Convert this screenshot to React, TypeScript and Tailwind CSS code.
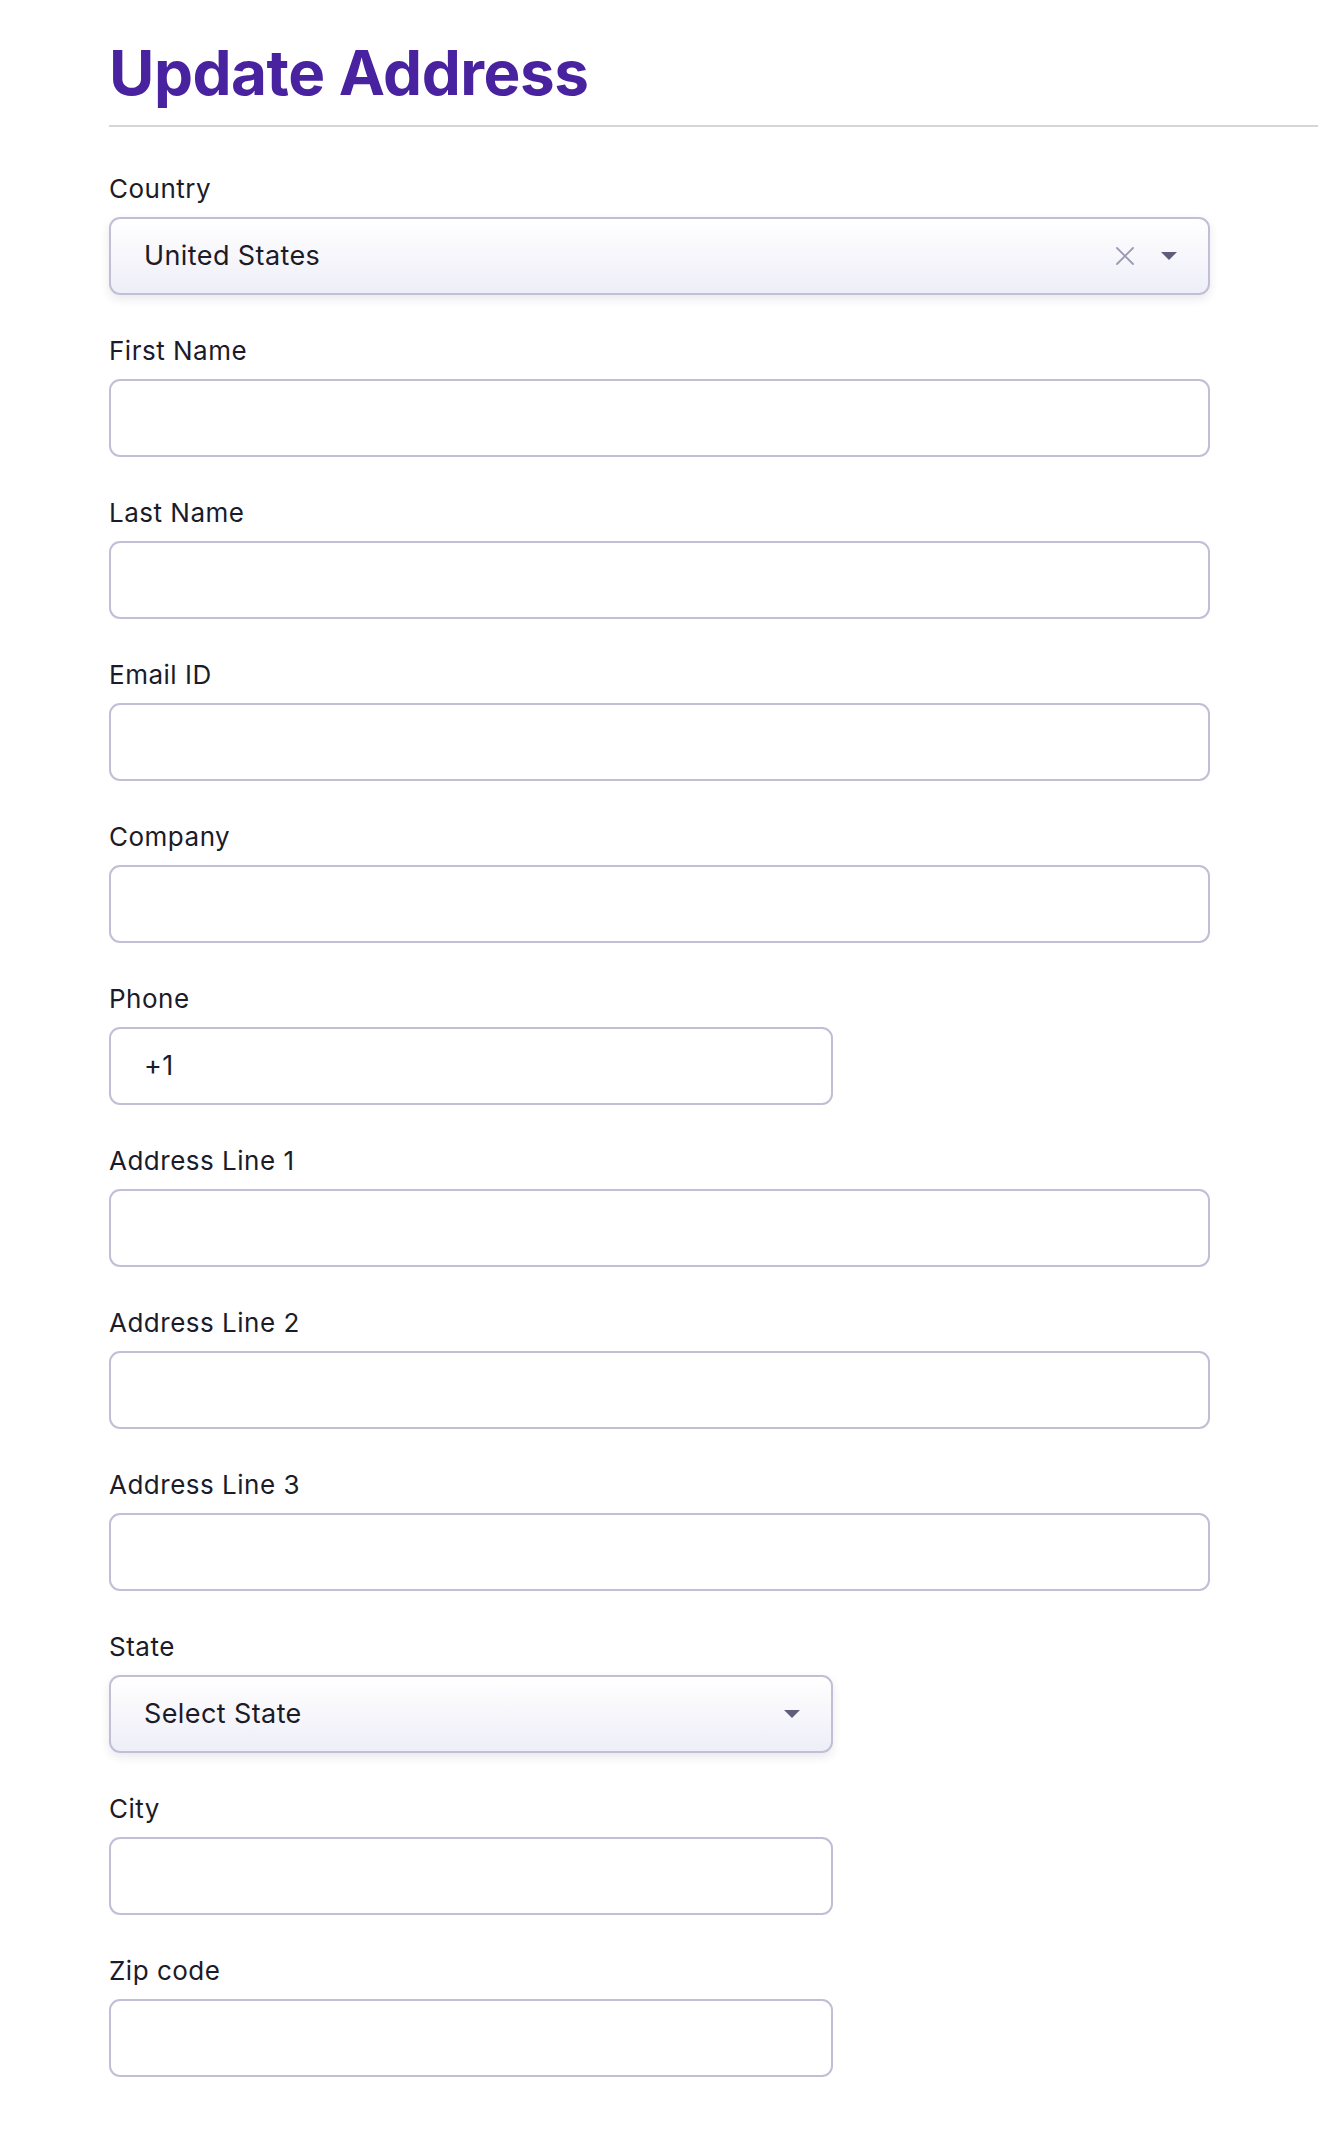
import React from "react";

type Field = {
  label: string;
  kind: "input" | "select";
  half?: boolean;
  value?: string;
  clearable?: boolean;
};

const fields: Field[] = [
  { label: "Country", kind: "select", value: "United States", clearable: true },
  { label: "First Name", kind: "input" },
  { label: "Last Name", kind: "input" },
  { label: "Email ID", kind: "input" },
  { label: "Company", kind: "input" },
  { label: "Phone", kind: "input", half: true, value: "+1" },
  { label: "Address Line 1", kind: "input" },
  { label: "Address Line 2", kind: "input" },
  { label: "Address Line 3", kind: "input" },
  { label: "State", kind: "select", half: true, value: "Select State" },
  { label: "City", kind: "input", half: true },
  { label: "Zip code", kind: "input", half: true },
];

export default function App() {
  return (
    <div
      className="min-h-screen bg-white pb-[56px] pl-[109px] text-[#1b1b29]"
      style={{ fontFamily: "Inter, 'Noto Sans', sans-serif" }}
    >
      <h1 className="pt-[35px] text-[62px] font-bold leading-[75px] tracking-[-0.5px] text-[#48229f]">
        Update Address
      </h1>
      <div className="mt-[15px] h-[2px] bg-[#d6d6d6]" />

      <form className="mt-[44px] flex flex-col gap-[38px]">
        {fields.map((f) => (
          <FormField key={f.label} field={f} />
        ))}
      </form>
    </div>
  );
}

function FormField({ field }: { field: Field }) {
  const width = field.half ? "w-[724px]" : "w-[1101px]";

  return (
    <div className="flex flex-col">
      <label className="text-[26px] leading-[35px] tracking-[0.5px] text-[#1b1b29]">
        {field.label}
      </label>

      {field.kind === "select" ? (
        <div
          className={`${width} mt-[11px] flex h-[78px] items-center rounded-[11px] border-2 border-[#c0bfd5] bg-gradient-to-b from-white to-[#eeeef8] pl-[33px] pr-[31px] shadow-[0_4px_10px_rgba(40,40,80,0.10)]`}
        >
          <span className="flex-1 text-[27px] tracking-[0.4px] text-[#1b1b29]">
            {field.value}
          </span>
          {field.clearable && (
            <svg
              width="18"
              height="18"
              viewBox="0 0 18 18"
              className="mr-[27px]"
              fill="none"
              stroke="#9c9ab3"
              strokeWidth="1.8"
              strokeLinecap="round"
            >
              <path d="M1 1 L17 17 M17 1 L1 17" />
            </svg>
          )}
          <svg width="16" height="8" viewBox="0 0 16 8">
            <path d="M0 0 H16 L8 8 Z" fill="#5f5d7b" />
          </svg>
        </div>
      ) : (
        <div
          className={`${width} mt-[11px] flex h-[78px] items-center rounded-[11px] border-2 border-[#c0bfd5] bg-white pl-[33px]`}
        >
          {field.value && (
            <span className="text-[27px] tracking-[0.4px] text-[#1b1b29]">
              {field.value}
            </span>
          )}
        </div>
      )}
    </div>
  );
}
